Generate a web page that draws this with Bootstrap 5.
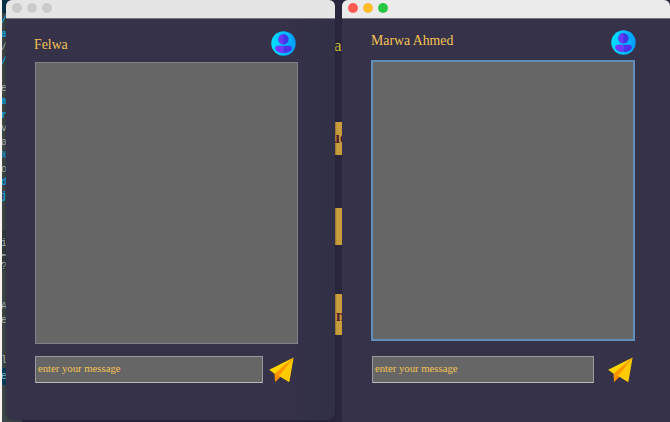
<!DOCTYPE html>
<html lang="en">
<head>
<meta charset="utf-8">
<meta name="viewport" content="width=device-width, initial-scale=1">
<title>Chat</title>
<link href="https://cdn.jsdelivr.net/npm/bootstrap@5.3.0/dist/css/bootstrap.min.css" rel="stylesheet">
<style>
body{background:#fbf3f0;font-family:"Liberation Serif",serif;width:670px;height:422px}
.desktop{width:668px;height:422px;margin-left:2px;background:#29263d}
/* source editor behind the windows */
.editor{width:20px;background:linear-gradient(#06324a 0 13px,#3c4444 13px 230px,#303a3b 230px 270px,#3d4646 270px);font:10px/13.5px "Liberation Mono",monospace;color:#aeb0ae;padding-top:14px}
.editor div{height:13.5px;text-indent:-1px}
.editor .kw{color:#12a4df;font-weight:bold}
.editor .gap{height:7px}
.editor .rule{height:2px;background:#8b9190;margin:3px 0 4px}
.editor .sel{height:17px;line-height:17px;background:#063d5c;color:#89b8cc}
/* page behind the windows */
.behind{width:100px;margin-left:312px;padding-top:36px;color:#c4bd31}
.behind .ttl{height:86px;font-size:17px;line-height:20px}
.blk{background:#c99c3c;color:#4e1b2b;font-weight:bold;font-size:16px;white-space:nowrap;overflow:hidden}
.b1{height:33px;line-height:32px;text-indent:-3px}
.b2{height:37px;margin-top:53px}
.b3{height:41px;margin-top:49px;line-height:44px;text-indent:2px}
.win{top:0;background:#353249;overflow:hidden}
.w1{left:6px;width:329px;height:420px;border-radius:6px 6px 8px 8px;background:linear-gradient(90deg,#353249 85%,#313047);box-shadow:0 0 2px #201f30}
.w2{left:342px;width:328px;height:422px;border-radius:6px 6px 0 0}
.tb{height:19px;background:#e5e5e5;border-bottom:1px solid #77757d;padding:0 0 2px 6px;gap:5px}
.w2 .tb{background:#ebebec}
.dot{width:10px;height:10px;border-radius:50%;background:#cbcbcb}
.red{background:#ff5b52}.yel{background:#ffbd2e}.grn{background:#28c840}
.who{color:#f3c253;font-size:13.8px;line-height:16px}
.w1 .head{height:43px;padding:12px 39.5px 0 28px}
.w2 .head{height:41px;padding:11px 34px 0 29px}
.w1 .who{margin-top:6px}.w2 .who{margin-top:3px}
.pane{background:#666;border:1px solid #82818b}
.w1 .pane{width:263px;height:282px;margin-left:29px}
.w2 .pane{width:264px;height:281px;margin-left:29px;border:2px solid #5f8fb8}
.foot{gap:6px}
.w1 .foot{margin:12px 0 0 29px}
.w2 .foot{margin:15px 0 0 30px;gap:14px}
.msg{height:27px;border:1px solid #9a999e;border-bottom-color:#bbbabb;border-radius:0;background:#666;color:#f3c253;font:10.7px/22px "Liberation Serif",serif;padding:0 2px 3px}
.msg::placeholder{color:#f3c253;opacity:1}
.msg:focus{background:#666;color:#f3c253;box-shadow:none}
.w1 .msg{width:228px}.w2 .msg{width:222px}
</style>
<script src="https://cdn.jsdelivr.net/npm/bootstrap@5.3.0/dist/js/bootstrap.bundle.min.js"></script>
</head>
<body class="overflow-hidden">
<svg width="0" height="0" class="position-absolute">
<defs>
<linearGradient id="sky"><stop offset="0" stop-color="#00e0ff"/><stop offset="1" stop-color="#009cff"/></linearGradient>
<symbol id="user" viewBox="0 0 25 25"><circle cx="12.5" cy="12.5" r="12.2" fill="url(#sky)"/><circle cx="12.5" cy="8.3" r="5.1" fill="#3f35e4"/><path d="M12.5 3.2a5.1 5.1 0 0 0 0 10.2z" fill="#6938f3"/><path d="M12.5 14.8H7.2C5 14.8 4.2 16 4.2 17.3c0 3 4 4.8 8.3 4.8z" fill="#7437fa"/><path d="M12.5 14.8h5.3c2.2 0 3 1.2 3 2.5 0 3-4 4.8-8.3 4.8z" fill="#4d31e8"/></symbol>
<symbol id="plane" viewBox="0 0 25 26"><path d="M24.6.5.2 12.8l5.6 4.2 3 1z" fill="#ffd400"/><path d="M24.6.5 5.6 16.8l.4 8.2 5.4-5.4z" fill="#ff9500"/><path d="M6 25l5.4-4.9-2.2-1.4z" fill="#f08200"/><path d="M24.6.5 10 19l10.3 6.2z" fill="#ffcb00"/></symbol>
</defs>
</svg>
<div class="desktop d-flex overflow-hidden">
<div class="editor flex-shrink-0">
<div class="kw">/</div><div class="kw">a</div><div>/</div><div class="kw">/</div><div></div><div>e</div><div class="kw">a</div><div class="kw">r</div><div>v</div><div>a</div><div class="kw">%</div><div>o</div><div class="kw">d</div><div class="kw">j</div><div></div><div></div><div class="gap"></div><div>i</div><div class="rule"></div><div>?</div><div></div><div></div><div>A</div><div>e</div><div></div><div></div><div>l</div><div class="sel">e</div>
</div>
<div class="behind flex-shrink-0">
<div class="ttl">a</div>
<div class="blk b1">ue</div>
<div class="blk b2"></div>
<div class="blk b3">n</div>
</div>
</div>
<section class="win w1 position-absolute">
<div class="tb d-flex align-items-center"><span class="dot"></span><span class="dot"></span><span class="dot"></span></div>
<div class="head d-flex justify-content-between align-items-start"><span class="who">Felwa</span><svg width="25" height="25"><use href="#user"/></svg></div>
<div class="pane"></div>
<div class="foot d-flex align-items-center"><input class="msg form-control" placeholder="enter your message"><svg width="25" height="26"><use href="#plane"/></svg></div>
</section>
<section class="win w2 position-absolute">
<div class="tb d-flex align-items-center"><span class="dot red"></span><span class="dot yel"></span><span class="dot grn"></span></div>
<div class="head d-flex justify-content-between align-items-start"><span class="who">Marwa Ahmed</span><svg width="25" height="25"><use href="#user"/></svg></div>
<div class="pane"></div>
<div class="foot d-flex align-items-center"><input class="msg form-control" placeholder="enter your message"><svg width="25" height="26"><use href="#plane"/></svg></div>
</section>
</body>
</html>
